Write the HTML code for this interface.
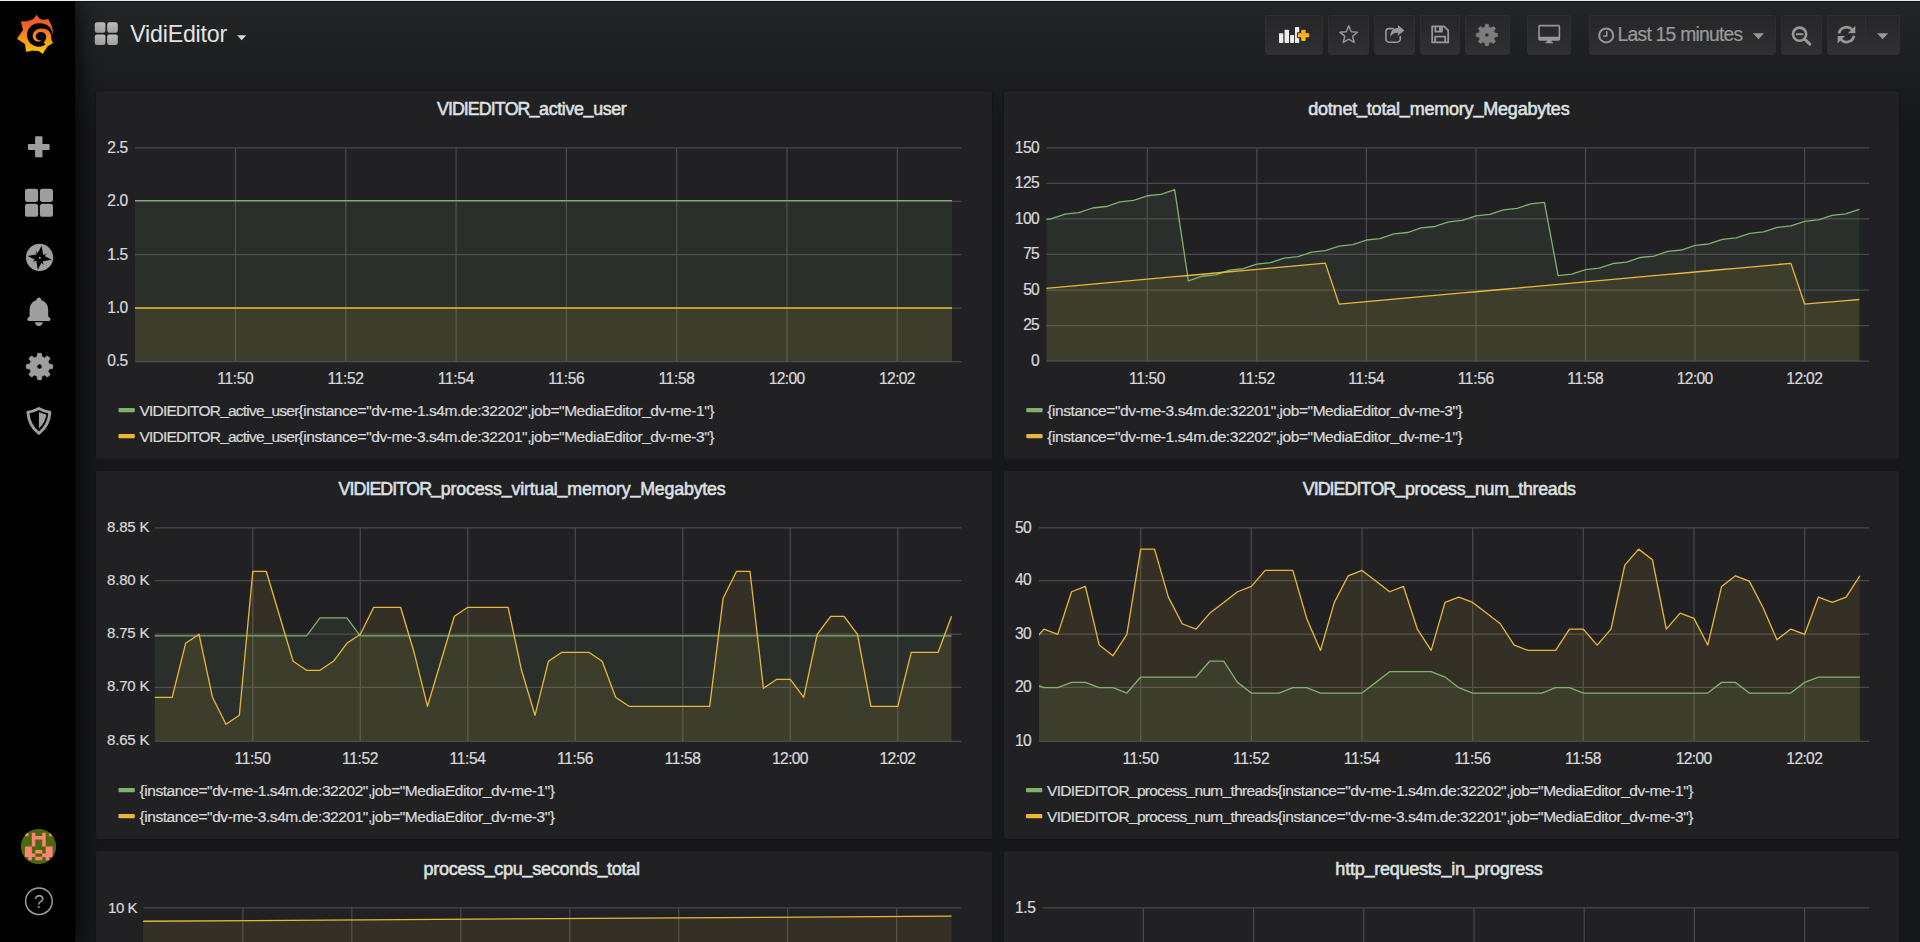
<!DOCTYPE html>
<html lang="en">
<head>
<meta charset="utf-8">
<title>Grafana - VidiEditor</title>
<style>
html,body{margin:0;padding:0}
body{width:1920px;height:942px;overflow:hidden;position:relative;background:#161719;
  font-family:"Liberation Sans",sans-serif;color:#d8d9da}
#view{position:absolute;left:75px;top:0;width:1845px;height:942px;
  background:linear-gradient(180deg,#222427 0,#222426 12px,#161719 125px,#161719 100%)}
#topline{position:absolute;left:0;top:0;width:1920px;height:1px;background:#ececf0;z-index:30}
#topline2{position:absolute;left:0;top:1px;width:1920px;height:1px;background:rgba(0,0,0,.45);z-index:30}
#side{position:absolute;left:0;top:0;width:75px;height:942px;background:#000;z-index:20;
  box-shadow:0 0 25px #000}
#side svg{position:absolute;left:0;top:0}
.panel{position:absolute;background:#212124;border:1px solid #141517;border-radius:3px;box-sizing:border-box;overflow:hidden}
.panel svg.chart{position:absolute;left:0;top:0}
.nb{position:absolute;top:15px;height:40px;box-sizing:border-box;border:1px solid #2f2f32;border-radius:3px;
  background:linear-gradient(180deg,#262628,#303032)}
#nav svg{position:absolute;left:0;top:0}
text{white-space:pre}
.ttl{stroke:#dfe0e1;stroke-width:.55px}
.ax,.lg{stroke:#d8d9da;stroke-width:.22px}
</style>
</head>
<body>
<div id="view">
</div>
<div id="nav">
  <div class="nb" style="left:1265px;width:58px"></div>
  <div class="nb" style="left:1328px;width:41px"></div>
  <div class="nb" style="left:1374px;width:41px"></div>
  <div class="nb" style="left:1420px;width:40px"></div>
  <div class="nb" style="left:1465px;width:45px"></div>
  <div class="nb" style="left:1527px;width:44px"></div>
  <div class="nb" style="left:1589px;width:187px"></div>
  <div class="nb" style="left:1781px;width:41px"></div>
  <div class="nb" style="left:1827px;width:39px;border-radius:3px 0 0 3px"></div>
  <div class="nb" style="left:1865px;width:35px;border-radius:0 3px 3px 0"></div>
  <svg width="1920" height="70" viewBox="0 0 1920 70" font-family="&quot;Liberation Sans&quot;, sans-serif">
    <defs>
      <linearGradient id="gsq" x1="0" y1="0" x2="0" y2="1"><stop offset="0" stop-color="#bdbdbd"/><stop offset="1" stop-color="#a0a0a0"/></linearGradient>
      <linearGradient id="gplus" x1="0" y1="0" x2="0" y2="1"><stop offset="0" stop-color="#ff9830"/><stop offset="1" stop-color="#fbca0a"/></linearGradient>
    </defs>
    <!-- dashboard icon -->
    <g fill="url(#gsq)">
      <rect x="94.8" y="22.2" width="10.6" height="10.6" rx="2.2"/>
      <rect x="107.2" y="22.2" width="10.6" height="10.6" rx="2.2"/>
      <rect x="94.8" y="34.4" width="10.6" height="10.6" rx="2.2"/>
      <rect x="107.2" y="34.4" width="10.6" height="10.6" rx="2.2"/>
    </g>
    <text x="130.2" y="41.9" font-size="23.2" fill="#e3e4e5" textLength="97" lengthAdjust="spacing">VidiEditor</text>
    <path d="M237.2 35.3h9l-4.5 5z" fill="#d8d9da"/>
    <rect x="1279" y="33.2" width="4.3" height="9.7" rx="0.6" fill="#ececec"/>
<rect x="1284.6" y="29.7" width="4.4" height="13.2" rx="0.6" fill="#ececec"/>
<rect x="1290.1" y="35" width="4" height="7.9" rx="0.6" fill="#ececec"/>
<rect x="1295" y="27.1" width="4.2" height="15.8" rx="0.6" fill="#ececec"/>
<path d="M1301.6 29.9h3.7v3.5h3.6v3.7h-3.6v3.5h-3.7v-3.5h-3.6v-3.7h3.6z" fill="url(#gplus)" stroke="#1c1c1e" stroke-width="2.2" paint-order="stroke" stroke-linejoin="round"/>
<path d="M1301.6 29.9h3.7v3.5h3.6v3.7h-3.6v3.5h-3.7v-3.5h-3.6v-3.7h3.6z" fill="url(#gplus)" stroke="url(#gplus)" stroke-width="0.5" stroke-linejoin="round"/>
<path d="M1348.7 25.7 L1351.11 31.68 L1357.54 32.13 L1352.6 36.27 L1354.17 42.52 L1348.7 39.1 L1343.23 42.52 L1344.8 36.27 L1339.86 32.13 L1346.29 31.68Z" fill="none" stroke="#989898" stroke-width="1.4" stroke-linejoin="round"/>
<path d="M1393.2 28.6h-4.2a3.1 3.1 0 0 0-3.1 3.1v7.4a3.1 3.1 0 0 0 3.1 3.1h8.2a3.1 3.1 0 0 0 3.1-3.1v-2.6" fill="none" stroke="#989898" stroke-width="1.6" stroke-linecap="round"/>
<path d="M1397.9 25l6.5 5.4-6.5 5.4v-3.1c-4 0-6.2 1.3-7.6 4.6c-.3-5.6 2.4-8.9 7.6-9.2z" fill="#989898"/>
<path d="M1432.2 26.3h11.8l4.2 4.2v11.9h-16z M1435.4 26.6v5h6.6v-5 M1435.2 42.2v-5.6h10v5.6" fill="none" stroke="#989898" stroke-width="1.8" stroke-linejoin="round"/>
<rect x="1439" y="27" width="2.2" height="4" fill="#989898"/>
<path d="M1484.85 27.27 L1485.46 24.3 L1488.34 24.3 L1488.95 27.27 L1490.92 28.08 L1493.45 26.41 L1495.49 28.45 L1493.82 30.98 L1494.63 32.95 L1497.6 33.56 L1497.6 36.44 L1494.63 37.05 L1493.82 39.02 L1495.49 41.55 L1493.45 43.59 L1490.92 41.92 L1488.95 42.73 L1488.34 45.7 L1485.46 45.7 L1484.85 42.73 L1482.88 41.92 L1480.35 43.59 L1478.31 41.55 L1479.98 39.02 L1479.17 37.05 L1476.2 36.44 L1476.2 33.56 L1479.17 32.95 L1479.98 30.98 L1478.31 28.45 L1480.35 26.41 L1482.88 28.08Z M1484.8 35 a2.1 2.1 0 1 0 4.2 0 a2.1 2.1 0 1 0 -4.2 0Z" fill="#7d7d7d" fill-rule="evenodd" stroke="#7d7d7d" stroke-width="0.7" stroke-linejoin="round"/>
<path d="M1539.9 24.8h18.6a1.7 1.7 0 0 1 1.7 1.7v12.6a1.7 1.7 0 0 1-1.7 1.7h-18.6a1.7 1.7 0 0 1-1.7-1.7v-12.6a1.7 1.7 0 0 1 1.7-1.7z M1539.8 26.4v10.3h18.8v-10.3z M1547 40.8h4.4l.5 1.5h1.2v1h-7.8v-1h1.2z" fill="#989898" fill-rule="evenodd"/>
<circle cx="1606.2" cy="35.4" r="7" fill="none" stroke="#989898" stroke-width="2"/>
<path d="M1606.7 31v5h-3.6" fill="none" stroke="#989898" stroke-width="1.5"/>
<path d="M1753 33.2h11l-5.5 6z" fill="#989898"/>
<circle cx="1799.6" cy="34.2" r="6.6" fill="none" stroke="#989898" stroke-width="2.6"/>
<path d="M1804.6 39.2l5.2 5" stroke="#989898" stroke-width="3" stroke-linecap="round"/>
<path d="M1796 34.2h7.3" stroke="#989898" stroke-width="2"/>
<path d="M1839 33.4a7.6 7.6 0 0 1 13.2-3.6" fill="none" stroke="#989898" stroke-width="2.7"/>
<path d="M1855.3 25.8v7.4h-7.4z" fill="#989898"/>
<path d="M1854 35.8a7.6 7.6 0 0 1-13.2 3.6" fill="none" stroke="#989898" stroke-width="2.7"/>
<path d="M1837.6 43.4v-7.4h7.4z" fill="#989898"/>
<path d="M1877 33.2h11.2l-5.6 6z" fill="#989898"/>
    <text x="1617.6" y="41.2" font-size="19.3" fill="#9a9a9a" stroke="#9a9a9a" stroke-width="0.2" textLength="125.5" lengthAdjust="spacing">Last 15 minutes</text>
  </svg>
</div>
<div class="panel" style="left:95px;top:90px;width:898px;height:370px">
<svg class="chart" width="896" height="368" viewBox="96 91 896 368" font-family="&quot;Liberation Sans&quot;, sans-serif">
<defs><clipPath id="clip0"><rect x="135" y="144.8" width="826.5" height="216.8"/></clipPath></defs>
<text x="436.95 447.9 451.92 463.84 467.86 478.81 490.74 494.76 504.7 517.62 529.55 539.11 548.68 557.24 561.85 565.47 574.04 583.6 593.16 602.73 611.29 620.86" y="115" font-size="17.8" fill="#dfe0e1" class="ttl" dy="0 0 0 0 0 0 0 0 0 0 -1.51 1.51 0 0 0 0 0 -1.51 1.51 0 0 0">VIDIEDITOR_active_user</text>
<path d="M135 147.8H961.5M135 201.25H961.5M135 254.7H961.5M135 308.15H961.5M135 361.6H961.5M235.5 147.8V361.6M345.8 147.8V361.6M456.1 147.8V361.6M566.4 147.8V361.6M676.7 147.8V361.6M787 147.8V361.6M897.3 147.8V361.6" stroke="rgba(200,200,200,0.235)" stroke-width="1.25" fill="none"/>
<g clip-path="url(#clip0)">
<path d="M125 361.6 L125 200.65 L952 200.65 L952 361.6Z" fill="#7eb26d" fill-opacity="0.1"/>
<path d="M125 361.6 L125 308 L952 308 L952 361.6Z" fill="#eab839" fill-opacity="0.1"/>
<path d="M125 200.65 L952 200.65" stroke="#7eb26d" stroke-width="1.3" fill="none" stroke-linejoin="round"/>
<path d="M125 308 L952 308" stroke="#eab839" stroke-width="1.3" fill="none" stroke-linejoin="round"/>
</g>
<text x="128.3" y="152.6" font-size="15.6" fill="#d8d9da" text-anchor="end" textLength="21" lengthAdjust="spacing" class="ax">2.5</text>
<text x="128.3" y="206.05" font-size="15.6" fill="#d8d9da" text-anchor="end" textLength="21" lengthAdjust="spacing" class="ax">2.0</text>
<text x="128.3" y="259.5" font-size="15.6" fill="#d8d9da" text-anchor="end" textLength="21" lengthAdjust="spacing" class="ax">1.5</text>
<text x="128.3" y="312.95" font-size="15.6" fill="#d8d9da" text-anchor="end" textLength="21" lengthAdjust="spacing" class="ax">1.0</text>
<text x="128.3" y="366.4" font-size="15.6" fill="#d8d9da" text-anchor="end" textLength="21" lengthAdjust="spacing" class="ax">0.5</text>
<text x="235.5" y="384.2" font-size="15.6" fill="#d8d9da" text-anchor="middle" textLength="36.5" lengthAdjust="spacing" class="ax">11:50</text>
<text x="345.8" y="384.2" font-size="15.6" fill="#d8d9da" text-anchor="middle" textLength="36.5" lengthAdjust="spacing" class="ax">11:52</text>
<text x="456.1" y="384.2" font-size="15.6" fill="#d8d9da" text-anchor="middle" textLength="36.5" lengthAdjust="spacing" class="ax">11:54</text>
<text x="566.4" y="384.2" font-size="15.6" fill="#d8d9da" text-anchor="middle" textLength="36.5" lengthAdjust="spacing" class="ax">11:56</text>
<text x="676.7" y="384.2" font-size="15.6" fill="#d8d9da" text-anchor="middle" textLength="36.5" lengthAdjust="spacing" class="ax">11:58</text>
<text x="787" y="384.2" font-size="15.6" fill="#d8d9da" text-anchor="middle" textLength="36.5" lengthAdjust="spacing" class="ax">12:00</text>
<text x="897.3" y="384.2" font-size="15.6" fill="#d8d9da" text-anchor="middle" textLength="36.5" lengthAdjust="spacing" class="ax">12:02</text>
<rect x="118.5" y="407.95" width="16.3" height="4.3" rx="0.8" fill="#7eb26d"/>
<text x="139.5 149.04 152.55 162.94 166.45 175.99 186.38 189.89 198.56 209.81 220.21 228.03 235.85 242.8 246.31 248.95 255.9 263.72 271.54 279.37 286.32 294.14 298.5 303.25 306.26 314.46 321.78 325.66 333.85 342.04 349.36 357.56 366.18 371.25 379.45 386.77 391.5 403.99 412.18 416.91 425.1 428.98 436.3 444.5 456.98 460.86 469.05 477.24 481.12 489.31 497.51 505.7 513.89 522.08 527.16 531.04 534.05 542.24 550.44 559.06 564.14 576.62 584.81 593 596.02 604.21 614.12 622.31 625.33 629.21 637.4 642.13 650.33 658.52 665.84 670.57 683.06 691.25 695.98 704.18 709.25" y="416" font-size="15.5" fill="#d8d9da" class="lg" dy="0 0 0 0 0 0 0 0 0 0 -1.32 1.32 0 0 0 0 0 -1.32 1.32 0 0 0 0 0 0 0 0 0 0 0 0 0 0 0 0 0 0 0 0 0 0 0 0 0 0 0 0 0 0 0 0 0 0 0 0 0 0 0 0 0 0 0 0 0 0 0 0 0 0 0 0 -1.32 1.32 0 0 0 0 0 0 0 0">VIDIEDITOR_active_user{instance="dv-me-1.s4m.de:32202",job="MediaEditor_dv-me-1"}</text>
<rect x="118.5" y="433.95" width="16.3" height="4.3" rx="0.8" fill="#eab839"/>
<text x="139.5 149.04 152.55 162.94 166.45 175.99 186.38 189.89 198.56 209.81 220.21 228.03 235.85 242.8 246.31 248.95 255.9 263.72 271.54 279.37 286.32 294.14 298.5 303.25 306.26 314.46 321.78 325.66 333.85 342.04 349.36 357.56 366.18 371.25 379.45 386.77 391.5 403.99 412.18 416.91 425.1 428.98 436.3 444.5 456.98 460.86 469.05 477.24 481.12 489.31 497.51 505.7 513.89 522.08 527.16 531.04 534.05 542.24 550.44 559.06 564.14 576.62 584.81 593 596.02 604.21 614.12 622.31 625.33 629.21 637.4 642.13 650.33 658.52 665.84 670.57 683.06 691.25 695.98 704.18 709.25" y="442" font-size="15.5" fill="#d8d9da" class="lg" dy="0 0 0 0 0 0 0 0 0 0 -1.32 1.32 0 0 0 0 0 -1.32 1.32 0 0 0 0 0 0 0 0 0 0 0 0 0 0 0 0 0 0 0 0 0 0 0 0 0 0 0 0 0 0 0 0 0 0 0 0 0 0 0 0 0 0 0 0 0 0 0 0 0 0 0 0 -1.32 1.32 0 0 0 0 0 0 0 0">VIDIEDITOR_active_user{instance="dv-me-3.s4m.de:32201",job="MediaEditor_dv-me-3"}</text>
</svg></div>
<div class="panel" style="left:1003px;top:90px;width:897px;height:370px">
<svg class="chart" width="895" height="368" viewBox="1004 91 895 368" font-family="&quot;Liberation Sans&quot;, sans-serif">
<defs><clipPath id="clip1"><rect x="1046.4" y="144.8" width="822.6" height="216.3"/></clipPath></defs>
<text x="1438.9" y="115" font-size="18" fill="#dfe0e1" text-anchor="middle" textLength="261.5" lengthAdjust="spacing" dy="0 0 0 0 0 0 -1.53 1.53 0 0 0 0 -1.53 1.53 0 0 0 0 0 -1.53 1.53 0 0 0 0 0 0 0 0" class="ttl">dotnet_total_memory_Megabytes</text>
<path d="M1046.4 147.8H1869M1046.4 183.35H1869M1046.4 218.9H1869M1046.4 254.45H1869M1046.4 290H1869M1046.4 325.55H1869M1046.4 361.1H1869M1147.3 147.8V361.1M1256.85 147.8V361.1M1366.4 147.8V361.1M1475.95 147.8V361.1M1585.5 147.8V361.1M1695.05 147.8V361.1M1804.6 147.8V361.1" stroke="rgba(200,200,200,0.235)" stroke-width="1.25" fill="none"/>
<g clip-path="url(#clip1)">
<path d="M1037.75 361.1 L1037.75 220.23 L1051.44 218.74 L1065.14 214.12 L1078.83 212.62 L1092.52 208 L1106.22 206.51 L1119.91 201.88 L1133.61 200.39 L1147.3 195.77 L1160.99 194.28 L1174.69 189.65 L1188.38 280.82 L1202.08 276.23 L1215.77 274.78 L1229.46 270.2 L1243.16 268.74 L1256.85 264.16 L1270.54 262.71 L1284.24 258.12 L1297.93 256.67 L1311.62 252.08 L1325.32 250.63 L1339.01 246.05 L1352.71 244.59 L1366.4 240.01 L1380.09 238.56 L1393.79 233.97 L1407.48 232.52 L1421.17 227.94 L1434.87 226.48 L1448.56 221.9 L1462.26 220.44 L1475.95 215.86 L1489.64 214.41 L1503.34 209.82 L1517.03 208.37 L1530.72 203.79 L1544.42 202.33 L1558.11 275.55 L1571.81 274.11 L1585.5 269.53 L1599.19 268.08 L1612.89 263.51 L1626.58 262.06 L1640.27 257.49 L1653.97 256.04 L1667.66 251.46 L1681.36 250.02 L1695.05 245.44 L1708.74 243.99 L1722.44 239.42 L1736.13 237.97 L1749.82 233.39 L1763.52 231.95 L1777.21 227.37 L1790.91 225.92 L1804.6 221.35 L1818.29 219.9 L1831.99 215.32 L1845.68 213.88 L1859.38 209.3 L1859.38 361.1Z" fill="#7eb26d" fill-opacity="0.1"/>
<path d="M1037.75 361.1 L1037.75 289.09 L1051.44 287.86 L1065.14 286.62 L1078.83 285.38 L1092.52 284.14 L1106.22 282.91 L1119.91 281.67 L1133.61 280.43 L1147.3 279.2 L1160.99 277.96 L1174.69 276.72 L1188.38 275.48 L1202.08 274.25 L1215.77 273.01 L1229.46 271.77 L1243.16 270.53 L1256.85 269.3 L1270.54 268.06 L1284.24 266.82 L1297.93 265.59 L1311.62 264.35 L1325.32 263.11 L1339.01 304.07 L1352.71 302.84 L1366.4 301.6 L1380.09 300.37 L1393.79 299.13 L1407.48 297.9 L1421.17 296.67 L1434.87 295.43 L1448.56 294.2 L1462.26 292.97 L1475.95 291.73 L1489.64 290.5 L1503.34 289.26 L1517.03 288.03 L1530.72 286.8 L1544.42 285.56 L1558.11 284.33 L1571.81 283.1 L1585.5 281.86 L1599.19 280.63 L1612.89 279.39 L1626.58 278.16 L1640.27 276.93 L1653.97 275.69 L1667.66 274.46 L1681.36 273.23 L1695.05 271.99 L1708.74 270.76 L1722.44 269.52 L1736.13 268.29 L1749.82 267.06 L1763.52 265.82 L1777.21 264.59 L1790.91 263.36 L1804.6 304.07 L1818.29 302.93 L1831.99 301.79 L1845.68 300.66 L1859.38 299.52 L1859.38 361.1Z" fill="#eab839" fill-opacity="0.1"/>
<path d="M1037.75 220.23 L1051.44 218.74 L1065.14 214.12 L1078.83 212.62 L1092.52 208 L1106.22 206.51 L1119.91 201.88 L1133.61 200.39 L1147.3 195.77 L1160.99 194.28 L1174.69 189.65 L1188.38 280.82 L1202.08 276.23 L1215.77 274.78 L1229.46 270.2 L1243.16 268.74 L1256.85 264.16 L1270.54 262.71 L1284.24 258.12 L1297.93 256.67 L1311.62 252.08 L1325.32 250.63 L1339.01 246.05 L1352.71 244.59 L1366.4 240.01 L1380.09 238.56 L1393.79 233.97 L1407.48 232.52 L1421.17 227.94 L1434.87 226.48 L1448.56 221.9 L1462.26 220.44 L1475.95 215.86 L1489.64 214.41 L1503.34 209.82 L1517.03 208.37 L1530.72 203.79 L1544.42 202.33 L1558.11 275.55 L1571.81 274.11 L1585.5 269.53 L1599.19 268.08 L1612.89 263.51 L1626.58 262.06 L1640.27 257.49 L1653.97 256.04 L1667.66 251.46 L1681.36 250.02 L1695.05 245.44 L1708.74 243.99 L1722.44 239.42 L1736.13 237.97 L1749.82 233.39 L1763.52 231.95 L1777.21 227.37 L1790.91 225.92 L1804.6 221.35 L1818.29 219.9 L1831.99 215.32 L1845.68 213.88 L1859.38 209.3" stroke="#7eb26d" stroke-width="1.3" fill="none" stroke-linejoin="round"/>
<path d="M1037.75 289.09 L1051.44 287.86 L1065.14 286.62 L1078.83 285.38 L1092.52 284.14 L1106.22 282.91 L1119.91 281.67 L1133.61 280.43 L1147.3 279.2 L1160.99 277.96 L1174.69 276.72 L1188.38 275.48 L1202.08 274.25 L1215.77 273.01 L1229.46 271.77 L1243.16 270.53 L1256.85 269.3 L1270.54 268.06 L1284.24 266.82 L1297.93 265.59 L1311.62 264.35 L1325.32 263.11 L1339.01 304.07 L1352.71 302.84 L1366.4 301.6 L1380.09 300.37 L1393.79 299.13 L1407.48 297.9 L1421.17 296.67 L1434.87 295.43 L1448.56 294.2 L1462.26 292.97 L1475.95 291.73 L1489.64 290.5 L1503.34 289.26 L1517.03 288.03 L1530.72 286.8 L1544.42 285.56 L1558.11 284.33 L1571.81 283.1 L1585.5 281.86 L1599.19 280.63 L1612.89 279.39 L1626.58 278.16 L1640.27 276.93 L1653.97 275.69 L1667.66 274.46 L1681.36 273.23 L1695.05 271.99 L1708.74 270.76 L1722.44 269.52 L1736.13 268.29 L1749.82 267.06 L1763.52 265.82 L1777.21 264.59 L1790.91 263.36 L1804.6 304.07 L1818.29 302.93 L1831.99 301.79 L1845.68 300.66 L1859.38 299.52" stroke="#eab839" stroke-width="1.3" fill="none" stroke-linejoin="round"/>
</g>
<text x="1039.8" y="152.6" font-size="15.6" fill="#d8d9da" text-anchor="end" textLength="25" lengthAdjust="spacing" class="ax">150</text>
<text x="1039.8" y="188.15" font-size="15.6" fill="#d8d9da" text-anchor="end" textLength="25" lengthAdjust="spacing" class="ax">125</text>
<text x="1039.8" y="223.7" font-size="15.6" fill="#d8d9da" text-anchor="end" textLength="25" lengthAdjust="spacing" class="ax">100</text>
<text x="1039.8" y="259.25" font-size="15.6" fill="#d8d9da" text-anchor="end" textLength="16.6" lengthAdjust="spacing" class="ax">75</text>
<text x="1039.8" y="294.8" font-size="15.6" fill="#d8d9da" text-anchor="end" textLength="16.6" lengthAdjust="spacing" class="ax">50</text>
<text x="1039.8" y="330.35" font-size="15.6" fill="#d8d9da" text-anchor="end" textLength="16.6" lengthAdjust="spacing" class="ax">25</text>
<text x="1039.8" y="365.9" font-size="15.6" fill="#d8d9da" text-anchor="end" textLength="8.3" lengthAdjust="spacing" class="ax">0</text>
<text x="1147.3" y="384.2" font-size="15.6" fill="#d8d9da" text-anchor="middle" textLength="36.5" lengthAdjust="spacing" class="ax">11:50</text>
<text x="1256.85" y="384.2" font-size="15.6" fill="#d8d9da" text-anchor="middle" textLength="36.5" lengthAdjust="spacing" class="ax">11:52</text>
<text x="1366.4" y="384.2" font-size="15.6" fill="#d8d9da" text-anchor="middle" textLength="36.5" lengthAdjust="spacing" class="ax">11:54</text>
<text x="1475.95" y="384.2" font-size="15.6" fill="#d8d9da" text-anchor="middle" textLength="36.5" lengthAdjust="spacing" class="ax">11:56</text>
<text x="1585.5" y="384.2" font-size="15.6" fill="#d8d9da" text-anchor="middle" textLength="36.5" lengthAdjust="spacing" class="ax">11:58</text>
<text x="1695.05" y="384.2" font-size="15.6" fill="#d8d9da" text-anchor="middle" textLength="36.5" lengthAdjust="spacing" class="ax">12:00</text>
<text x="1804.6" y="384.2" font-size="15.6" fill="#d8d9da" text-anchor="middle" textLength="36.5" lengthAdjust="spacing" class="ax">12:02</text>
<rect x="1026.3" y="407.95" width="16.3" height="4.3" rx="0.8" fill="#7eb26d"/>
<text x="1047.3" y="416" font-size="15.5" fill="#d8d9da" textLength="415.5" lengthAdjust="spacing" dy="0 0 0 0 0 0 0 0 0 0 0 0 0 0 0 0 0 0 0 0 0 0 0 0 0 0 0 0 0 0 0 0 0 0 0 0 0 0 0 0 0 0 0 0 0 0 0 0 0 -1.32 1.32 0 0 0 0 0 0 0 0" class="lg">{instance="dv-me-3.s4m.de:32201",job="MediaEditor_dv-me-3"}</text>
<rect x="1026.3" y="433.95" width="16.3" height="4.3" rx="0.8" fill="#eab839"/>
<text x="1047.3" y="442" font-size="15.5" fill="#d8d9da" textLength="415.5" lengthAdjust="spacing" dy="0 0 0 0 0 0 0 0 0 0 0 0 0 0 0 0 0 0 0 0 0 0 0 0 0 0 0 0 0 0 0 0 0 0 0 0 0 0 0 0 0 0 0 0 0 0 0 0 0 -1.32 1.32 0 0 0 0 0 0 0 0" class="lg">{instance="dv-me-1.s4m.de:32202",job="MediaEditor_dv-me-1"}</text>
</svg></div>
<div class="panel" style="left:95px;top:470px;width:898px;height:370px">
<svg class="chart" width="896" height="368" viewBox="96 471 896 368" font-family="&quot;Liberation Sans&quot;, sans-serif">
<defs><clipPath id="clip2"><rect x="154.8" y="524.8" width="806.4" height="216.5"/></clipPath></defs>
<text x="338.5 349.45 353.47 365.39 369.41 380.36 392.29 396.31 406.25 419.17 431.1 440.81 450.51 456.25 465.96 474.66 484.37 493.08 501.78 511.49 520.2 523.96 529.7 534.45 544.16 553.86 557.62 567.33 581.97 591.67 606.31 616.01 621.75 630.46 640.16 654.8 664.51 674.21 683.92 693.63 702.33 707.09 716.79" y="495" font-size="17.8" fill="#dfe0e1" class="ttl" dy="0 0 0 0 0 0 0 0 0 0 -1.51 1.51 0 0 0 0 0 0 -1.51 1.51 0 0 0 0 0 0 -1.51 1.51 0 0 0 0 0 -1.51 1.51 0 0 0 0 0 0 0 0">VIDIEDITOR_process_virtual_memory_Megabytes</text>
<path d="M154.8 527.8H961.2M154.8 580.5H961.2M154.8 634.1H961.2M154.8 687.4H961.2M154.8 741.3H961.2M252.8 527.8V741.3M360.3 527.8V741.3M467.8 527.8V741.3M575.3 527.8V741.3M682.8 527.8V741.3M790.3 527.8V741.3M897.8 527.8V741.3" stroke="rgba(200,200,200,0.235)" stroke-width="1.25" fill="none"/>
<g clip-path="url(#clip2)">
<path d="M145.3 741.3 L145.3 635.83 L158.74 635.83 L172.18 635.83 L185.61 635.83 L199.05 635.83 L212.49 635.83 L225.93 635.83 L239.36 635.83 L252.8 635.83 L266.24 635.83 L279.68 635.83 L293.11 635.83 L306.55 635.83 L319.99 617.83 L333.43 617.83 L346.86 617.83 L360.3 635.83 L373.74 635.83 L387.18 635.83 L400.61 635.83 L414.05 635.83 L427.49 635.83 L440.93 635.83 L454.36 635.83 L467.8 635.83 L481.24 635.83 L494.68 635.83 L508.11 635.83 L521.55 635.83 L534.99 635.83 L548.42 635.83 L561.86 635.83 L575.3 635.83 L588.74 635.83 L602.17 635.83 L615.61 635.83 L629.05 635.83 L642.49 635.83 L655.92 635.83 L669.36 635.83 L682.8 635.83 L696.24 635.83 L709.67 635.83 L723.11 635.83 L736.55 635.83 L749.99 635.83 L763.42 635.83 L776.86 635.83 L790.3 635.83 L803.74 635.83 L817.17 635.83 L830.61 635.83 L844.05 635.83 L857.49 635.83 L870.92 635.83 L884.36 635.83 L897.8 635.83 L911.24 635.83 L924.67 635.83 L938.11 635.83 L951.55 635.83 L951.55 741.3Z" fill="#7eb26d" fill-opacity="0.1"/>
<path d="M145.3 741.3 L145.3 697.3 L158.74 697.3 L172.18 697.3 L185.61 643.3 L199.05 634.3 L212.49 697.3 L225.93 724.3 L239.36 715.3 L252.8 571.3 L266.24 571.3 L279.68 616.3 L293.11 661.3 L306.55 670.3 L319.99 670.3 L333.43 661.3 L346.86 643.3 L360.3 634.3 L373.74 607.3 L387.18 607.3 L400.61 607.3 L414.05 652.3 L427.49 706.3 L440.93 661.3 L454.36 616.3 L467.8 607.3 L481.24 607.3 L494.68 607.3 L508.11 607.3 L521.55 670.3 L534.99 715.3 L548.42 661.3 L561.86 652.3 L575.3 652.3 L588.74 652.3 L602.17 661.3 L615.61 697.3 L629.05 706.3 L642.49 706.3 L655.92 706.3 L669.36 706.3 L682.8 706.3 L696.24 706.3 L709.67 706.3 L723.11 598.3 L736.55 571.3 L749.99 571.3 L763.42 688.3 L776.86 679.3 L790.3 679.3 L803.74 697.3 L817.17 634.3 L830.61 616.3 L844.05 616.3 L857.49 634.3 L870.92 706.3 L884.36 706.3 L897.8 706.3 L911.24 652.3 L924.67 652.3 L938.11 652.3 L951.55 616.3 L951.55 741.3Z" fill="#eab839" fill-opacity="0.1"/>
<path d="M145.3 635.83 L158.74 635.83 L172.18 635.83 L185.61 635.83 L199.05 635.83 L212.49 635.83 L225.93 635.83 L239.36 635.83 L252.8 635.83 L266.24 635.83 L279.68 635.83 L293.11 635.83 L306.55 635.83 L319.99 617.83 L333.43 617.83 L346.86 617.83 L360.3 635.83 L373.74 635.83 L387.18 635.83 L400.61 635.83 L414.05 635.83 L427.49 635.83 L440.93 635.83 L454.36 635.83 L467.8 635.83 L481.24 635.83 L494.68 635.83 L508.11 635.83 L521.55 635.83 L534.99 635.83 L548.42 635.83 L561.86 635.83 L575.3 635.83 L588.74 635.83 L602.17 635.83 L615.61 635.83 L629.05 635.83 L642.49 635.83 L655.92 635.83 L669.36 635.83 L682.8 635.83 L696.24 635.83 L709.67 635.83 L723.11 635.83 L736.55 635.83 L749.99 635.83 L763.42 635.83 L776.86 635.83 L790.3 635.83 L803.74 635.83 L817.17 635.83 L830.61 635.83 L844.05 635.83 L857.49 635.83 L870.92 635.83 L884.36 635.83 L897.8 635.83 L911.24 635.83 L924.67 635.83 L938.11 635.83 L951.55 635.83" stroke="#7eb26d" stroke-width="1.3" fill="none" stroke-linejoin="round"/>
<path d="M145.3 697.3 L158.74 697.3 L172.18 697.3 L185.61 643.3 L199.05 634.3 L212.49 697.3 L225.93 724.3 L239.36 715.3 L252.8 571.3 L266.24 571.3 L279.68 616.3 L293.11 661.3 L306.55 670.3 L319.99 670.3 L333.43 661.3 L346.86 643.3 L360.3 634.3 L373.74 607.3 L387.18 607.3 L400.61 607.3 L414.05 652.3 L427.49 706.3 L440.93 661.3 L454.36 616.3 L467.8 607.3 L481.24 607.3 L494.68 607.3 L508.11 607.3 L521.55 670.3 L534.99 715.3 L548.42 661.3 L561.86 652.3 L575.3 652.3 L588.74 652.3 L602.17 661.3 L615.61 697.3 L629.05 706.3 L642.49 706.3 L655.92 706.3 L669.36 706.3 L682.8 706.3 L696.24 706.3 L709.67 706.3 L723.11 598.3 L736.55 571.3 L749.99 571.3 L763.42 688.3 L776.86 679.3 L790.3 679.3 L803.74 697.3 L817.17 634.3 L830.61 616.3 L844.05 616.3 L857.49 634.3 L870.92 706.3 L884.36 706.3 L897.8 706.3 L911.24 652.3 L924.67 652.3 L938.11 652.3 L951.55 616.3" stroke="#eab839" stroke-width="1.3" fill="none" stroke-linejoin="round"/>
</g>
<text x="149.5" y="531.8" font-size="15" fill="#d8d9da" text-anchor="end" textLength="42.5" lengthAdjust="spacing" class="ax">8.85 K</text>
<text x="149.5" y="584.5" font-size="15" fill="#d8d9da" text-anchor="end" textLength="42.5" lengthAdjust="spacing" class="ax">8.80 K</text>
<text x="149.5" y="638.1" font-size="15" fill="#d8d9da" text-anchor="end" textLength="42.5" lengthAdjust="spacing" class="ax">8.75 K</text>
<text x="149.5" y="691.4" font-size="15" fill="#d8d9da" text-anchor="end" textLength="42.5" lengthAdjust="spacing" class="ax">8.70 K</text>
<text x="149.5" y="745.3" font-size="15" fill="#d8d9da" text-anchor="end" textLength="42.5" lengthAdjust="spacing" class="ax">8.65 K</text>
<text x="252.8" y="764.2" font-size="15.6" fill="#d8d9da" text-anchor="middle" textLength="36.5" lengthAdjust="spacing" class="ax">11:50</text>
<text x="360.3" y="764.2" font-size="15.6" fill="#d8d9da" text-anchor="middle" textLength="36.5" lengthAdjust="spacing" class="ax">11:52</text>
<text x="467.8" y="764.2" font-size="15.6" fill="#d8d9da" text-anchor="middle" textLength="36.5" lengthAdjust="spacing" class="ax">11:54</text>
<text x="575.3" y="764.2" font-size="15.6" fill="#d8d9da" text-anchor="middle" textLength="36.5" lengthAdjust="spacing" class="ax">11:56</text>
<text x="682.8" y="764.2" font-size="15.6" fill="#d8d9da" text-anchor="middle" textLength="36.5" lengthAdjust="spacing" class="ax">11:58</text>
<text x="790.3" y="764.2" font-size="15.6" fill="#d8d9da" text-anchor="middle" textLength="36.5" lengthAdjust="spacing" class="ax">12:00</text>
<text x="897.8" y="764.2" font-size="15.6" fill="#d8d9da" text-anchor="middle" textLength="36.5" lengthAdjust="spacing" class="ax">12:02</text>
<rect x="118.5" y="787.95" width="16.3" height="4.3" rx="0.8" fill="#7eb26d"/>
<text x="139.5" y="796" font-size="15.5" fill="#d8d9da" textLength="415.5" lengthAdjust="spacing" dy="0 0 0 0 0 0 0 0 0 0 0 0 0 0 0 0 0 0 0 0 0 0 0 0 0 0 0 0 0 0 0 0 0 0 0 0 0 0 0 0 0 0 0 0 0 0 0 0 0 -1.32 1.32 0 0 0 0 0 0 0 0" class="lg">{instance="dv-me-1.s4m.de:32202",job="MediaEditor_dv-me-1"}</text>
<rect x="118.5" y="813.95" width="16.3" height="4.3" rx="0.8" fill="#eab839"/>
<text x="139.5" y="822" font-size="15.5" fill="#d8d9da" textLength="415.5" lengthAdjust="spacing" dy="0 0 0 0 0 0 0 0 0 0 0 0 0 0 0 0 0 0 0 0 0 0 0 0 0 0 0 0 0 0 0 0 0 0 0 0 0 0 0 0 0 0 0 0 0 0 0 0 0 -1.32 1.32 0 0 0 0 0 0 0 0" class="lg">{instance="dv-me-3.s4m.de:32201",job="MediaEditor_dv-me-3"}</text>
</svg></div>
<div class="panel" style="left:1003px;top:470px;width:897px;height:370px">
<svg class="chart" width="895" height="368" viewBox="1004 471 895 368" font-family="&quot;Liberation Sans&quot;, sans-serif">
<defs><clipPath id="clip3"><rect x="1039" y="524.8" width="830" height="216.5"/></clipPath></defs>
<text x="1302.7 1313.65 1317.67 1329.59 1333.61 1344.56 1356.49 1360.51 1370.45 1383.37 1395.3 1404.92 1414.54 1420.18 1429.8 1438.42 1448.04 1456.66 1465.28 1474.9 1484.51 1494.13 1508.68 1518.3 1522.96 1532.58 1538.23 1547.84 1557.46 1567.08" y="495" font-size="17.8" fill="#dfe0e1" class="ttl" dy="0 0 0 0 0 0 0 0 0 0 -1.51 1.51 0 0 0 0 0 0 -1.51 1.51 0 0 -1.51 1.51 0 0 0 0 0 0">VIDIEDITOR_process_num_threads</text>
<path d="M1039 527.8H1869M1039 580.5H1869M1039 634.1H1869M1039 687.4H1869M1039 741.3H1869M1140.7 527.8V741.3M1251.35 527.8V741.3M1362 527.8V741.3M1472.65 527.8V741.3M1583.3 527.8V741.3M1693.95 527.8V741.3M1804.6 527.8V741.3" stroke="rgba(200,200,200,0.235)" stroke-width="1.25" fill="none"/>
<g clip-path="url(#clip3)">
<path d="M1030.05 741.3 L1030.05 682.37 L1043.88 687.7 L1057.71 687.7 L1071.54 682.37 L1085.38 682.37 L1099.21 687.7 L1113.04 687.7 L1126.87 693.03 L1140.7 677.04 L1154.53 677.04 L1168.36 677.04 L1182.19 677.04 L1196.03 677.04 L1209.86 661.05 L1223.69 661.05 L1237.52 682.37 L1251.35 693.03 L1265.18 693.03 L1279.01 693.03 L1292.84 687.7 L1306.68 687.7 L1320.51 693.03 L1334.34 693.03 L1348.17 693.03 L1362 693.03 L1375.83 682.37 L1389.66 671.71 L1403.49 671.71 L1417.33 671.71 L1431.16 671.71 L1444.99 677.04 L1458.82 687.7 L1472.65 693.03 L1486.48 693.03 L1500.31 693.03 L1514.14 693.03 L1527.98 693.03 L1541.81 693.03 L1555.64 687.7 L1569.47 687.7 L1583.3 693.03 L1597.13 693.03 L1610.96 693.03 L1624.79 693.03 L1638.62 693.03 L1652.46 693.03 L1666.29 693.03 L1680.12 693.03 L1693.95 693.03 L1707.78 693.03 L1721.61 682.37 L1735.44 682.37 L1749.28 693.03 L1763.11 693.03 L1776.94 693.03 L1790.77 693.03 L1804.6 682.37 L1818.43 677.04 L1832.26 677.04 L1846.09 677.04 L1859.93 677.04 L1859.93 741.3Z" fill="#7eb26d" fill-opacity="0.1"/>
<path d="M1030.05 741.3 L1030.05 645.06 L1043.88 629.07 L1057.71 634.4 L1071.54 591.76 L1085.38 586.43 L1099.21 645.06 L1113.04 655.72 L1126.87 634.4 L1140.7 549.12 L1154.53 549.12 L1168.36 597.09 L1182.19 623.74 L1196.03 629.07 L1209.86 613.08 L1223.69 602.42 L1237.52 591.76 L1251.35 586.43 L1265.18 570.44 L1279.01 570.44 L1292.84 570.44 L1306.68 618.41 L1320.51 650.39 L1334.34 602.42 L1348.17 575.77 L1362 570.44 L1375.83 581.1 L1389.66 591.76 L1403.49 586.43 L1417.33 629.07 L1431.16 650.39 L1444.99 602.42 L1458.82 597.09 L1472.65 602.42 L1486.48 613.08 L1500.31 623.74 L1514.14 645.06 L1527.98 650.39 L1541.81 650.39 L1555.64 650.39 L1569.47 629.07 L1583.3 629.07 L1597.13 645.06 L1610.96 629.07 L1624.79 565.11 L1638.62 549.12 L1652.46 559.78 L1666.29 629.07 L1680.12 613.08 L1693.95 618.41 L1707.78 645.06 L1721.61 586.43 L1735.44 575.77 L1749.28 581.1 L1763.11 607.75 L1776.94 639.73 L1790.77 629.07 L1804.6 634.4 L1818.43 597.09 L1832.26 602.42 L1846.09 597.09 L1859.93 575.77 L1859.93 741.3Z" fill="#eab839" fill-opacity="0.1"/>
<path d="M1030.05 682.37 L1043.88 687.7 L1057.71 687.7 L1071.54 682.37 L1085.38 682.37 L1099.21 687.7 L1113.04 687.7 L1126.87 693.03 L1140.7 677.04 L1154.53 677.04 L1168.36 677.04 L1182.19 677.04 L1196.03 677.04 L1209.86 661.05 L1223.69 661.05 L1237.52 682.37 L1251.35 693.03 L1265.18 693.03 L1279.01 693.03 L1292.84 687.7 L1306.68 687.7 L1320.51 693.03 L1334.34 693.03 L1348.17 693.03 L1362 693.03 L1375.83 682.37 L1389.66 671.71 L1403.49 671.71 L1417.33 671.71 L1431.16 671.71 L1444.99 677.04 L1458.82 687.7 L1472.65 693.03 L1486.48 693.03 L1500.31 693.03 L1514.14 693.03 L1527.98 693.03 L1541.81 693.03 L1555.64 687.7 L1569.47 687.7 L1583.3 693.03 L1597.13 693.03 L1610.96 693.03 L1624.79 693.03 L1638.62 693.03 L1652.46 693.03 L1666.29 693.03 L1680.12 693.03 L1693.95 693.03 L1707.78 693.03 L1721.61 682.37 L1735.44 682.37 L1749.28 693.03 L1763.11 693.03 L1776.94 693.03 L1790.77 693.03 L1804.6 682.37 L1818.43 677.04 L1832.26 677.04 L1846.09 677.04 L1859.93 677.04" stroke="#7eb26d" stroke-width="1.3" fill="none" stroke-linejoin="round"/>
<path d="M1030.05 645.06 L1043.88 629.07 L1057.71 634.4 L1071.54 591.76 L1085.38 586.43 L1099.21 645.06 L1113.04 655.72 L1126.87 634.4 L1140.7 549.12 L1154.53 549.12 L1168.36 597.09 L1182.19 623.74 L1196.03 629.07 L1209.86 613.08 L1223.69 602.42 L1237.52 591.76 L1251.35 586.43 L1265.18 570.44 L1279.01 570.44 L1292.84 570.44 L1306.68 618.41 L1320.51 650.39 L1334.34 602.42 L1348.17 575.77 L1362 570.44 L1375.83 581.1 L1389.66 591.76 L1403.49 586.43 L1417.33 629.07 L1431.16 650.39 L1444.99 602.42 L1458.82 597.09 L1472.65 602.42 L1486.48 613.08 L1500.31 623.74 L1514.14 645.06 L1527.98 650.39 L1541.81 650.39 L1555.64 650.39 L1569.47 629.07 L1583.3 629.07 L1597.13 645.06 L1610.96 629.07 L1624.79 565.11 L1638.62 549.12 L1652.46 559.78 L1666.29 629.07 L1680.12 613.08 L1693.95 618.41 L1707.78 645.06 L1721.61 586.43 L1735.44 575.77 L1749.28 581.1 L1763.11 607.75 L1776.94 639.73 L1790.77 629.07 L1804.6 634.4 L1818.43 597.09 L1832.26 602.42 L1846.09 597.09 L1859.93 575.77" stroke="#eab839" stroke-width="1.3" fill="none" stroke-linejoin="round"/>
</g>
<text x="1031.7" y="532.6" font-size="15.6" fill="#d8d9da" text-anchor="end" textLength="16.6" lengthAdjust="spacing" class="ax">50</text>
<text x="1031.7" y="585.3" font-size="15.6" fill="#d8d9da" text-anchor="end" textLength="16.6" lengthAdjust="spacing" class="ax">40</text>
<text x="1031.7" y="638.9" font-size="15.6" fill="#d8d9da" text-anchor="end" textLength="16.6" lengthAdjust="spacing" class="ax">30</text>
<text x="1031.7" y="692.2" font-size="15.6" fill="#d8d9da" text-anchor="end" textLength="16.6" lengthAdjust="spacing" class="ax">20</text>
<text x="1031.7" y="746.1" font-size="15.6" fill="#d8d9da" text-anchor="end" textLength="16.6" lengthAdjust="spacing" class="ax">10</text>
<text x="1140.7" y="764.2" font-size="15.6" fill="#d8d9da" text-anchor="middle" textLength="36.5" lengthAdjust="spacing" class="ax">11:50</text>
<text x="1251.35" y="764.2" font-size="15.6" fill="#d8d9da" text-anchor="middle" textLength="36.5" lengthAdjust="spacing" class="ax">11:52</text>
<text x="1362" y="764.2" font-size="15.6" fill="#d8d9da" text-anchor="middle" textLength="36.5" lengthAdjust="spacing" class="ax">11:54</text>
<text x="1472.65" y="764.2" font-size="15.6" fill="#d8d9da" text-anchor="middle" textLength="36.5" lengthAdjust="spacing" class="ax">11:56</text>
<text x="1583.3" y="764.2" font-size="15.6" fill="#d8d9da" text-anchor="middle" textLength="36.5" lengthAdjust="spacing" class="ax">11:58</text>
<text x="1693.95" y="764.2" font-size="15.6" fill="#d8d9da" text-anchor="middle" textLength="36.5" lengthAdjust="spacing" class="ax">12:00</text>
<text x="1804.6" y="764.2" font-size="15.6" fill="#d8d9da" text-anchor="middle" textLength="36.5" lengthAdjust="spacing" class="ax">12:02</text>
<rect x="1026" y="787.95" width="16.3" height="4.3" rx="0.8" fill="#7eb26d"/>
<text x="1047 1056.67 1060.3 1070.82 1074.45 1084.12 1094.64 1098.27 1107.07 1118.45 1128.97 1136.92 1144.87 1149.36 1157.3 1164.38 1172.33 1179.41 1186.48 1194.43 1202.38 1210.32 1222.56 1230.51 1234.14 1242.09 1246.58 1254.53 1262.48 1270.42 1277.5 1282.25 1285.26 1293.46 1300.78 1304.66 1312.85 1321.04 1328.36 1336.56 1345.18 1350.25 1358.45 1365.77 1370.5 1382.99 1391.18 1395.91 1404.1 1407.98 1415.3 1423.5 1435.98 1439.86 1448.05 1456.24 1460.12 1468.31 1476.51 1484.7 1492.89 1501.08 1506.16 1510.04 1513.05 1521.24 1529.44 1538.06 1543.14 1555.62 1563.81 1572 1575.02 1583.21 1593.12 1601.31 1604.33 1608.21 1616.4 1621.13 1629.33 1637.52 1644.84 1649.57 1662.06 1670.25 1674.98 1683.18 1688.25" y="796" font-size="15.5" fill="#d8d9da" class="lg" dy="0 0 0 0 0 0 0 0 0 0 -1.32 1.32 0 0 0 0 0 0 -1.32 1.32 0 0 -1.32 1.32 0 0 0 0 0 0 0 0 0 0 0 0 0 0 0 0 0 0 0 0 0 0 0 0 0 0 0 0 0 0 0 0 0 0 0 0 0 0 0 0 0 0 0 0 0 0 0 0 0 0 0 0 0 0 0 -1.32 1.32 0 0 0 0 0 0 0 0">VIDIEDITOR_process_num_threads{instance="dv-me-1.s4m.de:32202",job="MediaEditor_dv-me-1"}</text>
<rect x="1026" y="813.95" width="16.3" height="4.3" rx="0.8" fill="#eab839"/>
<text x="1047 1056.67 1060.3 1070.82 1074.45 1084.12 1094.64 1098.27 1107.07 1118.45 1128.97 1136.92 1144.87 1149.36 1157.3 1164.38 1172.33 1179.41 1186.48 1194.43 1202.38 1210.32 1222.56 1230.51 1234.14 1242.09 1246.58 1254.53 1262.48 1270.42 1277.5 1282.25 1285.26 1293.46 1300.78 1304.66 1312.85 1321.04 1328.36 1336.56 1345.18 1350.25 1358.45 1365.77 1370.5 1382.99 1391.18 1395.91 1404.1 1407.98 1415.3 1423.5 1435.98 1439.86 1448.05 1456.24 1460.12 1468.31 1476.51 1484.7 1492.89 1501.08 1506.16 1510.04 1513.05 1521.24 1529.44 1538.06 1543.14 1555.62 1563.81 1572 1575.02 1583.21 1593.12 1601.31 1604.33 1608.21 1616.4 1621.13 1629.33 1637.52 1644.84 1649.57 1662.06 1670.25 1674.98 1683.18 1688.25" y="822" font-size="15.5" fill="#d8d9da" class="lg" dy="0 0 0 0 0 0 0 0 0 0 -1.32 1.32 0 0 0 0 0 0 -1.32 1.32 0 0 -1.32 1.32 0 0 0 0 0 0 0 0 0 0 0 0 0 0 0 0 0 0 0 0 0 0 0 0 0 0 0 0 0 0 0 0 0 0 0 0 0 0 0 0 0 0 0 0 0 0 0 0 0 0 0 0 0 0 0 -1.32 1.32 0 0 0 0 0 0 0 0">VIDIEDITOR_process_num_threads{instance="dv-me-3.s4m.de:32201",job="MediaEditor_dv-me-3"}</text>
</svg></div>
<div class="panel" style="left:95px;top:850px;width:898px;height:370px">
<svg class="chart" width="896" height="368" viewBox="96 851 896 368" font-family="&quot;Liberation Sans&quot;, sans-serif">
<defs><clipPath id="clip4"><rect x="143.2" y="904.8" width="818" height="216.2"/></clipPath></defs>
<text x="531.8" y="875" font-size="18" fill="#dfe0e1" text-anchor="middle" textLength="216.5" lengthAdjust="spacing" dy="0 0 0 0 0 0 0 -1.53 1.53 0 0 -1.53 1.53 0 0 0 0 0 0 -1.53 1.53 0 0 0 0" class="ttl">process_cpu_seconds_total</text>
<path d="M143.2 907.8H961.2M242.9 907.8V1121M351.85 907.8V1121M460.8 907.8V1121M569.75 907.8V1121M678.7 907.8V1121M787.65 907.8V1121M896.6 907.8V1121" stroke="rgba(200,200,200,0.235)" stroke-width="1.25" fill="none"/>
<g clip-path="url(#clip4)">
<path d="M133 1121 L133 921.3 L951.5 916.2 L951.5 1121Z" fill="#eab839" fill-opacity="0.1"/>
<path d="M133 921.3 L951.5 916.2" stroke="#eab839" stroke-width="1.3" fill="none" stroke-linejoin="round"/>
</g>
<text x="137.5" y="912.6" font-size="15" fill="#d8d9da" text-anchor="end" textLength="29.5" lengthAdjust="spacing" class="ax">10 K</text>
</svg></div>
<div class="panel" style="left:1003px;top:850px;width:897px;height:370px">
<svg class="chart" width="895" height="368" viewBox="1004 851 895 368" font-family="&quot;Liberation Sans&quot;, sans-serif">
<defs><clipPath id="clip5"><rect x="1042.8" y="904.8" width="826.2" height="216.2"/></clipPath></defs>
<text x="1439.1" y="875" font-size="18" fill="#dfe0e1" text-anchor="middle" textLength="207.5" lengthAdjust="spacing" dy="0 0 0 0 -1.53 1.53 0 0 0 0 0 0 0 -1.53 1.53 0 -1.53 1.53 0 0 0 0 0 0 0" class="ttl">http_requests_in_progress</text>
<path d="M1042.8 907.8H1869M1143.4 907.8V1121M1253.6 907.8V1121M1363.8 907.8V1121M1474 907.8V1121M1584.2 907.8V1121M1694.4 907.8V1121M1804.6 907.8V1121" stroke="rgba(200,200,200,0.235)" stroke-width="1.25" fill="none"/>
<g clip-path="url(#clip5)">
</g>
<text x="1036" y="912.6" font-size="15.6" fill="#d8d9da" text-anchor="end" textLength="21" lengthAdjust="spacing" class="ax">1.5</text>
</svg></div>
<div id="side">
  <svg width="75" height="942" viewBox="0 0 75 942" font-family="&quot;Liberation Sans&quot;, sans-serif">
    <defs>
      <linearGradient id="glogo" x1="0" y1="15" x2="0" y2="54" gradientUnits="userSpaceOnUse">
        <stop offset="0" stop-color="#f05a28"/><stop offset="0.25" stop-color="#f0602a"/><stop offset="1" stop-color="#fbca0a"/>
      </linearGradient>
      <clipPath id="avc"><circle cx="38.5" cy="846.5" r="17.6"/></clipPath>
    </defs>
    <path d="M36.5 15 L39.8 19 L43.1 20.1 L48.3 19.2 L49.3 21.5 L51.2 25 L52.5 29.8 L52.9 33.9 L50.6 34.2 L51.2 40.1 L52.9 43.1 L47.6 46.2 L42.6 53.8 L38.9 50.9 L32.1 50.5 L26.3 51.8 L25 43.9 L17.1 38.7 L23.1 30.1 L21.1 21.4 L26.5 21.6 L32.3 19.7 L33.6 19Z" fill="url(#glogo)" stroke="url(#glogo)" stroke-width="0.3" stroke-linejoin="round"/>
<circle cx="38.7" cy="35" r="11.7" fill="#000"/>
<path d="M41 23.4 C44 23.2 47.6 24.6 49.7 27.2 C51.2 29.2 52.2 31.6 52.7 33.9 L50.3 34.4 C49.6 31.5 47.5 28.5 43.5 27Z" fill="#000"/>
<path d="M51.3 42.5 C51.3 39 51.2 36 50.6 34.2 C50.2 31.5 47.5 28.6 41.2 28.5 C36 28.8 32.4 32.3 32.7 36.4 C33 39.6 35.8 41.6 38.6 41.4 C40 41.3 41 41 41.4 40.4 C40 40.6 38.6 40.4 37.6 39.7 C36.2 38.8 35.5 37.4 35.8 35.6 C36.3 33.2 38.6 31.7 41.2 31.9 C44.2 32.2 46.3 34.2 46.2 37 C46.1 39.4 45 41.2 43.8 42.3 L46.5 46.5Z" fill="url(#glogo)"/>
<path d="M36 136.3h5.6a0.9 0.9 0 0 1 .9.9v6.7h6.2a0.9 0.9 0 0 1 .9.9v4.3a0.9 0.9 0 0 1-.9.9h-6.2v6.4a0.9 0.9 0 0 1-.9.9h-5.6a0.9 0.9 0 0 1-.9-.9v-6.4h-6.3a0.9 0.9 0 0 1-.9-.9v-4.3a0.9 0.9 0 0 1 .9-.9h6.3v-6.7a0.9 0.9 0 0 1 .9-.9z" fill="#9e9e9e"/>
<rect x="25" y="188.8" width="13.1" height="13.1" rx="2.6" fill="#9e9e9e"/>
<rect x="39.9" y="188.8" width="13.1" height="13.1" rx="2.6" fill="#9e9e9e"/>
<rect x="25" y="203.7" width="13.1" height="13.1" rx="2.6" fill="#9e9e9e"/>
<rect x="39.9" y="203.7" width="13.1" height="13.1" rx="2.6" fill="#9e9e9e"/>
<circle cx="39.55" cy="257.45" r="13.6" fill="#9e9e9e"/>
<g transform="rotate(9 39.7 257.8)">
<path d="M39.7 245.6 L42.74 254.76 L51.9 257.8 L42.74 260.84 L39.7 270 L36.66 260.84 L27.5 257.8 L36.66 254.76Z" fill="#000"/>
<path d="M46.15 252.74 L41.88 258.06 L44.76 264.25 L39.44 259.98 L33.25 262.86 L37.52 257.54 L34.64 251.35 L39.96 255.62Z" fill="#000"/>
<circle cx="39.7" cy="257.8" r="4.2" fill="#000"/>
</g>
<circle cx="39.8" cy="257.8" r="1.1" fill="#9e9e9e"/>
<path d="M38.9 297.6 c1.3 0 2.3 1 2.4 2.5 c4.3 1.4 6.9 5 6.9 10.4 v5.2 c0 .9 .7 1.4 1.2 1.7 c.7 .4 1.1 1 1.1 1.8 c0 1.1 -.8 1.9 -2 1.9 h-19.2 c-1.2 0 -2 -.8 -2 -1.9 c0 -.8 .4 -1.4 1.1 -1.8 c.5 -.3 1.2 -.8 1.2 -1.7 v-5.2 c0 -5.4 2.6 -9 6.9 -10.4 c.1 -1.5 1.1 -2.5 2.4 -2.5z" fill="#9e9e9e"/>
<path d="M34.9 322.3h8c-.3 2.3-1.9 3.9-4 3.9s-3.7-1.6-4-3.9z" fill="#9e9e9e"/>
<path d="M36.96 356.93 L37.73 353.32 L41.27 353.32 L42.04 356.93 L44.47 357.94 L47.57 355.93 L50.07 358.43 L48.06 361.53 L49.07 363.96 L52.68 364.73 L52.68 368.27 L49.07 369.04 L48.06 371.47 L50.07 374.57 L47.57 377.07 L44.47 375.06 L42.04 376.07 L41.27 379.68 L37.73 379.68 L36.96 376.07 L34.53 375.06 L31.43 377.07 L28.93 374.57 L30.94 371.47 L29.93 369.04 L26.32 368.27 L26.32 364.73 L29.93 363.96 L30.94 361.53 L28.93 358.43 L31.43 355.93 L34.53 357.94Z M36.9 366.5 a2.6 2.6 0 1 0 5.2 0 a2.6 2.6 0 1 0 -5.2 0Z" fill="#9e9e9e" fill-rule="evenodd" stroke="#9e9e9e" stroke-width="0.8" stroke-linejoin="round"/>
<path d="M38.9 408.4 C35.5 410.3 31.6 411.6 27.9 412.2 C28.4 421 32.3 428.3 38.9 433.4 C45.5 428.3 49.4 421 49.9 412.2 C46.2 411.6 42.3 410.3 38.9 408.4Z" fill="none" stroke="#9e9e9e" stroke-width="2.9" stroke-linejoin="round"/>
<path d="M38.9 412 C41.3 413.2 43.8 414 46.4 414.5 C45.6 420.1 43 424.8 38.9 428.4Z" fill="#9e9e9e"/>
<g clip-path="url(#avc)"><rect x="20" y="828" width="38" height="38" fill="#4b690b"/>
<path d="M24.89 832.63h3.51v3.51h-3.51zM31.81 832.63h3.51v3.51h-3.51zM42.19 832.63h3.51v3.51h-3.51zM49.11 832.63h3.51v3.51h-3.51zM31.81 836.09h3.51v3.51h-3.51zM35.27 836.09h3.51v3.51h-3.51zM38.73 836.09h3.51v3.51h-3.51zM42.19 836.09h3.51v3.51h-3.51zM31.81 839.55h3.51v3.51h-3.51zM42.19 839.55h3.51v3.51h-3.51zM31.81 843.01h3.51v3.51h-3.51zM42.19 843.01h3.51v3.51h-3.51zM24.89 846.47h3.51v3.51h-3.51zM28.35 846.47h3.51v3.51h-3.51zM45.65 846.47h3.51v3.51h-3.51zM49.11 846.47h3.51v3.51h-3.51zM24.89 849.93h3.51v3.51h-3.51zM28.35 849.93h3.51v3.51h-3.51zM35.27 849.93h3.51v3.51h-3.51zM38.73 849.93h3.51v3.51h-3.51zM45.65 849.93h3.51v3.51h-3.51zM49.11 849.93h3.51v3.51h-3.51zM24.89 853.39h3.51v3.51h-3.51zM28.35 853.39h3.51v3.51h-3.51zM31.81 853.39h3.51v3.51h-3.51zM42.19 853.39h3.51v3.51h-3.51zM45.65 853.39h3.51v3.51h-3.51zM49.11 853.39h3.51v3.51h-3.51zM28.35 856.85h3.51v3.51h-3.51zM35.27 856.85h3.51v3.51h-3.51zM38.73 856.85h3.51v3.51h-3.51zM45.65 856.85h3.51v3.51h-3.51z" fill="#fd8277"/></g>
<circle cx="38.9" cy="901.2" r="13.3" fill="none" stroke="#9e9e9e" stroke-width="1.5"/>
<text x="38.9" y="907.6" font-size="18" fill="#9e9e9e" text-anchor="middle">?</text>
  </svg>
</div>
<div id="topline"></div>
<div id="topline2"></div>
</body>
</html>
